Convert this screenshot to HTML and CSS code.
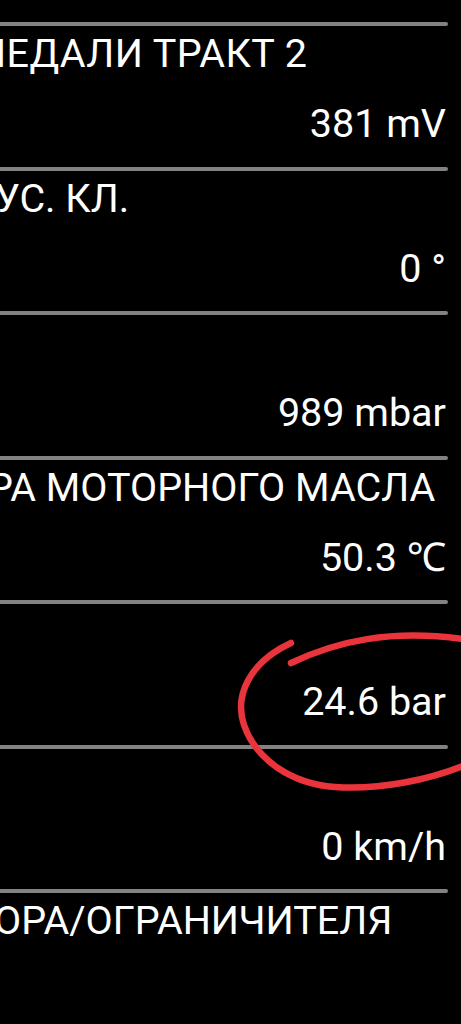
FILE: index.html
```html
<!DOCTYPE html>
<html lang="ru">
<head>
<meta charset="utf-8">
<title>Параметры</title>
<link rel="stylesheet" href="styles.css">
</head>
<body>
<div class="screen">
  <div class="list">
    <div class="row">
      <div class="divider"></div>
      <div class="title"><span class="clip clip-1">ПЕДАЛИ ТРАКТ 2</span></div>
      <div class="value">381 mV</div>
    </div>
    <div class="row">
      <div class="divider"></div>
      <div class="title"><span class="clip clip-2">УС. КЛ.</span></div>
      <div class="value">0 °</div>
    </div>
    <div class="row">
      <div class="divider"></div>
      <div class="title"></div>
      <div class="value">989 mbar</div>
    </div>
    <div class="row">
      <div class="divider"></div>
      <div class="title"><span class="clip clip-4">РА МОТОРНОГО МАСЛА</span></div>
      <div class="value">50.3 ℃</div>
    </div>
    <div class="row">
      <div class="divider"></div>
      <div class="title"></div>
      <div class="value">24.6 bar</div>
    </div>
    <div class="row">
      <div class="divider"></div>
      <div class="title"></div>
      <div class="value">0 km/h</div>
    </div>
    <div class="row">
      <div class="divider"></div>
      <div class="title"><span class="clip clip-7">ОРА/ОГРАНИЧИТЕЛЯ</span></div>
      <div class="value"></div>
    </div>
  </div>
  <svg class="mark" viewBox="0 0 231 200" width="231" height="200" aria-hidden="true">
    <path d="M61,63 C105,42 160,28 240,40" />
    <path d="M240,163 C200,180 150,190 105,187 C62,184 26,160 14,125 C4,95 20,62 61,43" />
  </svg>
</div>
</body>
</html>
```
FILE: styles.css
```css
html, body {
  margin: 0;
  padding: 0;
  background: #000;
}

.screen {
  position: relative;
  width: 461px;
  height: 1024px;
  overflow: hidden;
  background: #000;
  color: #fff;
  font-family: Roboto, "Noto Sans", "Liberation Sans", sans-serif;
  font-size: 39.5px;
}

.list {
  display: flex;
  flex-direction: column;
  padding-top: 22px;
  width: 448px;
}

.row {
  display: flex;
  flex-direction: column;
  height: 144.5px;
}

.divider {
  height: 4px;
  background: #828282;
  border-radius: 0 2px 2px 0;
  flex: none;
}

.title {
  margin-top: 6px;
  height: 44px;
  line-height: 44px;
  white-space: nowrap;
  overflow: hidden;
}

.clip {
  display: inline-block;
}

.clip-1 { margin-left: -22px; letter-spacing: 0.4px; }
.clip-2 { margin-left: -5px; }
.clip-4 { margin-left: -12px; }
.clip-7 { margin-left: -6px; }

.value {
  margin-top: 26px;
  height: 44px;
  line-height: 44px;
  text-align: right;
  padding-right: 2px;
  white-space: nowrap;
}

.mark {
  position: absolute;
  left: 230px;
  top: 600px;
  overflow: visible;
}

.mark path {
  fill: none;
  stroke: #e8343a;
  stroke-width: 6.5;
  stroke-linecap: round;
}
```
